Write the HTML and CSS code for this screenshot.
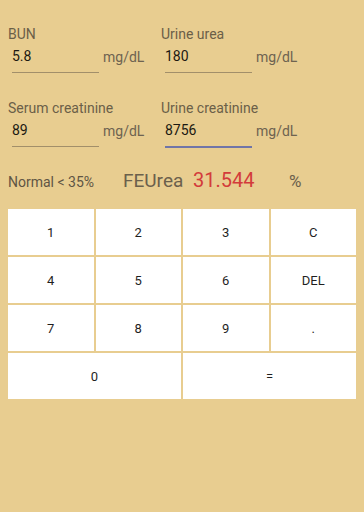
FILE: index.html
```html
<!DOCTYPE html>
<html>
<head>
<meta charset="utf-8">
<link rel="stylesheet" href="styles.css">
</head>
<body>
<div class="app">
  <div class="fields">
    <div class="field">
      <div class="label">BUN</div>
      <div class="row">
        <div class="input">5.8</div>
        <div class="unit">mg/dL</div>
      </div>
    </div>
    <div class="field">
      <div class="label">Urine urea</div>
      <div class="row">
        <div class="input">180</div>
        <div class="unit">mg/dL</div>
      </div>
    </div>
    <div class="field second">
      <div class="label">Serum creatinine</div>
      <div class="row">
        <div class="input">89</div>
        <div class="unit">mg/dL</div>
      </div>
    </div>
    <div class="field second">
      <div class="label">Urine creatinine</div>
      <div class="row">
        <div class="input focused">8756</div>
        <div class="unit">mg/dL</div>
      </div>
    </div>
  </div>
  <div class="result">
    <span class="normal">Normal &lt; 35%</span>
    <span class="name">FEUrea</span>
    <span class="value">31.544</span>
    <span class="pct">%</span>
  </div>
  <div class="keypad">
    <div class="key">1</div>
    <div class="key">2</div>
    <div class="key">3</div>
    <div class="key">C</div>
    <div class="key">4</div>
    <div class="key">5</div>
    <div class="key">6</div>
    <div class="key">DEL</div>
    <div class="key">7</div>
    <div class="key">8</div>
    <div class="key">9</div>
    <div class="key">.</div>
    <div class="key wide">0</div>
    <div class="key wide">=</div>
  </div>
</div>
</body>
</html>
```
FILE: styles.css
```css
html, body {
  margin: 0;
  padding: 0;
  background: #e8cd90;
  height: 100%;
}
body {
  font-family: Roboto, "Liberation Sans", sans-serif;
  width: 364px;
  height: 512px;
  overflow: hidden;
}
.app {
  padding: 26px 8px 0 8px;
}
.fields {
  display: grid;
  grid-template-columns: 153px 153px;
  row-gap: 27px;
}
.label {
  font-size: 14px;
  line-height: 16px;
  color: #6b5f48;
  height: 16px;
  white-space: nowrap;
}
.row {
  display: flex;
  align-items: flex-start;
  margin-top: 4px;
}
.input {
  margin-left: 4px;
  width: 87px;
  box-sizing: border-box;
  padding: 0 0 6px 0;
  font-size: 14px;
  line-height: 20px;
  color: #1c1912;
  border-bottom: 1px solid #a28f6a;
}
.input.focused {
  border-bottom: 2px solid #7075a8;
  padding-bottom: 6px;
}
.unit {
  margin-left: 4px;
  font-size: 14px;
  line-height: 22px;
  color: #6e6350;
}
.result {
  display: flex;
  align-items: baseline;
  margin-top: 20px;
  height: 24px;
}
.result span {
  line-height: 24px;
  white-space: nowrap;
}
.normal {
  font-size: 14px;
  color: #5f5544;
  width: 115px;
}
.name {
  font-size: 19px;
  color: #6b604c;
  width: 70px;
}
.value {
  font-size: 20px;
  color: #d33b3b;
  width: 96px;
}
.pct {
  font-size: 17px;
  color: #6b604c;
}
.keypad {
  margin-top: 17px;
  width: 348px;
  display: grid;
  grid-template-columns: repeat(4, 1fr);
  grid-auto-rows: 46px;
  gap: 2px;
}
.key {
  background: #ffffff;
  display: flex;
  align-items: center;
  justify-content: center;
  font-size: 13px;
  color: #1f1f1f;
}
.key.wide {
  grid-column: span 2;
}
```
